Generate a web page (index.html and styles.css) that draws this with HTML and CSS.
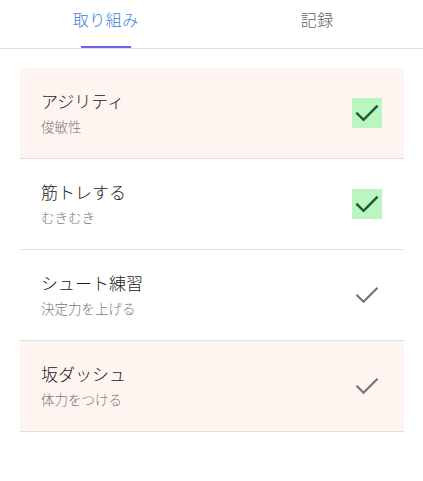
FILE: index.html
```html
<!DOCTYPE html>
<html lang="ja">
<head>
<meta charset="utf-8">
<link rel="stylesheet" href="styles.css">
</head>
<body>
<div class="tabs">
  <div class="tab active"><span class="tab-label">取り組み</span><span class="indicator"></span></div>
  <div class="tab"><span class="tab-label">記録</span></div>
</div>
<ul class="list">
  <li class="item tinted first">
    <div class="texts"><div class="title">アジリティ</div><div class="sub">俊敏性</div></div>
    <span class="check done"><svg viewBox="0 0 24 24" width="26" height="26"><polyline points="3,12.5 8.8,18.3 21,6.1" /></svg></span>
  </li>
  <li class="item">
    <div class="texts"><div class="title">筋トレする</div><div class="sub">むきむき</div></div>
    <span class="check done"><svg viewBox="0 0 24 24" width="26" height="26"><polyline points="3,12.5 8.8,18.3 21,6.1" /></svg></span>
  </li>
  <li class="item">
    <div class="texts"><div class="title">シュート練習</div><div class="sub">決定力を上げる</div></div>
    <span class="check"><svg viewBox="0 0 24 24" width="26" height="26"><polyline points="3,12.5 8.8,18.3 21,6.1" /></svg></span>
  </li>
  <li class="item tinted">
    <div class="texts"><div class="title">坂ダッシュ</div><div class="sub">体力をつける</div></div>
    <span class="check"><svg viewBox="0 0 24 24" width="26" height="26"><polyline points="3,12.5 8.8,18.3 21,6.1" /></svg></span>
  </li>
</ul>
</body>
</html>
```
FILE: styles.css
```css
* { box-sizing: border-box; }
body {
  margin: 0;
  background: #fff;
  font-family: "Noto Sans CJK JP", "Noto Sans", sans-serif;
  color: #222;
}
.tabs {
  display: flex;
  height: 49px;
  border-bottom: 1px solid #dcdcdc;
}
.tab {
  flex: 1;
  display: flex;
  flex-direction: column;
  align-items: center;
  padding-top: 8px;
  font-size: 16px;
  font-weight: 300;
  color: #5f5f5f;
}
.tab-label {
  line-height: 22px;
  letter-spacing: 0.5px;
}
.tab.active { color: #3b7ddd; }
.indicator {
  margin-top: auto;
  width: 50px;
  height: 2px;
  background: #6a63ef;
}
.list {
  list-style: none;
  margin: 19px 19px 0 20px;
  padding: 0;
}
.item {
  display: flex;
  align-items: center;
  justify-content: space-between;
  height: 91px;
  padding: 0 22px 0 21px;
  border-bottom: 1px solid #e0e0e0;
}
.item.tinted { background: #fef5f0; }
.item.first { border-radius: 4px 4px 0 0; }
.texts { display: flex; flex-direction: column; }
.title {
  font-size: 17px;
  font-weight: 300;
  line-height: 26px;
  color: #222;
}
.sub {
  font-size: 13.5px;
  font-weight: 300;
  line-height: 24px;
  color: #7a7a7a;
}
.check {
  width: 30px;
  height: 30px;
  display: flex;
  align-items: center;
  justify-content: center;
}
.check svg polyline {
  fill: none;
  stroke: #757575;
  stroke-width: 2;
  stroke-linecap: square;
}
.check.done { background: #b9f6c0; }
.check.done svg polyline { stroke: #1f5a36; stroke-width: 2.3; }
```
